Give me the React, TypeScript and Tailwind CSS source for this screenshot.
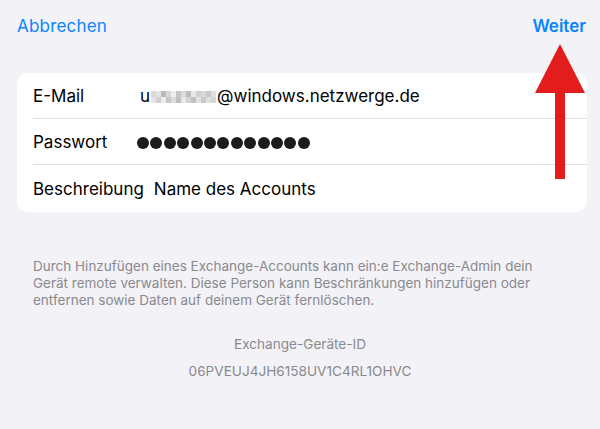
import React from "react";

const font = { fontFamily: "Inter, 'Noto Sans', sans-serif" };

function Blur() {
  const shades = ["#d9d9d9", "#e4e4e4", "#b9b9b9", "#d6d6d6", "#ececec", "#c4c4c4", "#dadada", "#bdbdbd", "#e8e8e8", "#cfcfcf", "#d9d9d9", "#c7c7c7", "#e1e1e1"];
  const shades2 = ["#e6e6e6", "#d0d0d0", "#ededed", "#c6c6c6", "#dcdcdc", "#bfbfbf", "#e9e9e9", "#d3d3d3", "#c1c1c1", "#e2e2e2", "#cbcbcb", "#dedede", "#d5d5d5"];
  return (
    <span className="inline-flex flex-col mx-[1px] align-middle">
      <span className="flex">
        {shades.map((c, i) => (
          <span key={i} className="block w-[5px] h-[6px]" style={{ background: c }} />
        ))}
      </span>
      <span className="flex">
        {shades2.map((c, i) => (
          <span key={i} className="block w-[5px] h-[6px]" style={{ background: c }} />
        ))}
      </span>
    </span>
  );
}

export default function App() {
  return (
    <div className="relative w-[600px] h-[429px] bg-[#f2f2f7] overflow-hidden" style={font}>
      <div className="flex justify-between items-center h-[50px] pt-[4px] pl-[17px] pr-[14px] text-[17px] text-[#0a84ff]">
        <span className="tracking-[0.2px]">Abbrechen</span>
        <span className="font-semibold">Weiter</span>
      </div>

      <div className="ml-[17px] mr-[13px] mt-[23px] bg-white rounded-[10px] pl-[16px] text-[17px] text-black">
        <div className="flex items-center h-[46px] pt-[3px] border-b border-[#e0e0e3]">
          <span className="min-w-[107px] pr-[10px]">E-Mail</span>
          <span className="flex items-center">
            u
            <Blur />
            @windows.netzwerge.de
          </span>
        </div>
        <div className="flex items-center h-[46px] pt-[3px] border-b border-[#e0e0e3]">
          <span className="min-w-[104px] pr-[10px]">Passwort</span>
          <span className="flex gap-[1.4px]">
            {Array.from({ length: 13 }).map((_, i) => (
              <span key={i} className="block w-[12px] h-[12px] rounded-full bg-[#1c1c1e]" />
            ))}
          </span>
        </div>
        <div className="flex items-center h-[47px] pt-[3px]">
          <span className="min-w-[107px] pr-[10px]">Beschreibung</span>
          <span>Name des Accounts</span>
        </div>
      </div>

      <p className="ml-[33px] w-[508px] mt-[46px] text-[13.5px] leading-[17px] text-[#8a8a8e]">
        Durch Hinzufügen eines Exchange-Accounts kann ein:e Exchange-Admin dein Gerät remote verwalten. Diese Person kann Beschränkungen hinzufügen oder entfernen sowie Daten auf deinem Gerät fernlöschen.
      </p>

      <div className="flex flex-col items-center mt-[27px] text-[13.6px] leading-[17px] text-[#8a8a8e] gap-[10px]">
        <span>Exchange-Geräte-ID</span>
        <span>06PVEUJ4JH6158UV1C4RL1OHVC</span>
      </div>

      <svg className="absolute left-0 top-0" width="600" height="429" viewBox="0 0 600 429">
        <polygon points="560,44 585,93 535,93" fill="#e31c1c" />
        <rect x="555" y="92" width="10" height="87" fill="#e31c1c" />
      </svg>
    </div>
  );
}
